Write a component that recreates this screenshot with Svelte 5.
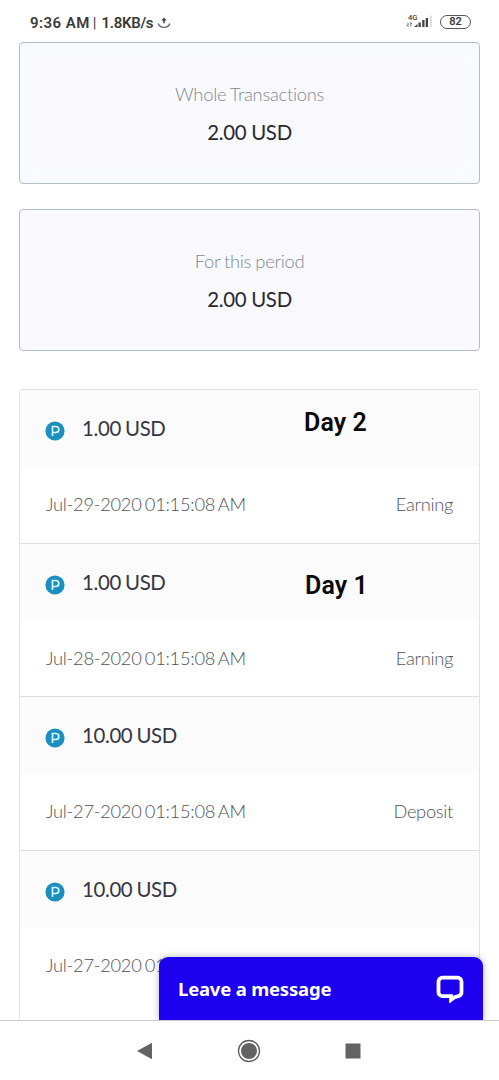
<script>
  const summaries = [
    { label: 'Whole Transactions', amount: '2.00 USD', tone: 'cool' },
    { label: 'For this period', amount: '2.00 USD', tone: 'plain' }
  ];
  const rows = [
    { amount: '1.00 USD', date: 'Jul-29-2020 01:15:08 AM', kind: 'Earning', note: 'Day 2' },
    { amount: '1.00 USD', date: 'Jul-28-2020 01:15:08 AM', kind: 'Earning', note: 'Day 1' },
    { amount: '10.00 USD', date: 'Jul-27-2020 01:15:08 AM', kind: 'Deposit' },
    { amount: '10.00 USD', date: 'Jul-27-2020 01:15:08 AM', kind: 'Deposit' }
  ];
</script>

<div class="screen">
  <header class="status">
    <div class="status-left">
      <span class="clock">9:36 AM</span><span class="bar">|</span><span class="speed">1.8KB/s</span>
      <svg class="share" width="14" height="14" viewBox="0 0 14 14">
        <path d="M1.200 7.500C2 10 4 11.400 7 11.400s5-1.400 5.800-3.900" fill="none" stroke="#666" stroke-width="1.300" />
        <path d="M7 1.500 4.200 4.500h2v2.800h1.600V4.500h2z" fill="#444" />
      </svg>
    </div>
    <div class="status-right">
      <svg width="27" height="17" viewBox="0 0 27 17">
        <text x="2" y="6.600" class="net">4G</text>
        <path d="M2 9.500v4M.7 11.800 2 13.500M4.800 13.500v-4M6 11.200 4.800 9.500" fill="none" stroke="#666" stroke-width=".9" />
        <path d="M8 14l3.500-3V14zM12.500 9.500h2.300V14h-2.300zM16.200 7h2.300v7h-2.300zM19.700 5h2.300v9h-2.300z" fill="#444" />
        <path d="M24 2.500h1.800V14H24z" fill="#ddd" />
      </svg>
      <span class="battery">82</span>
    </div>
  </header>

  <main class="page">
    {#each summaries as s}
      <section class="card {s.tone}">
        <div class="label">{s.label}</div>
        <div class="total">{s.amount}</div>
      </section>
    {/each}

    <section class="list">
      {#each rows as r}
        <article class="row">
          <div class="head">
            <svg class="coin" width="20" height="20" viewBox="0 0 20 20">
              <circle cx="10" cy="10" r="9.600" fill="#1b8fbd" />
              <path d="M7.500 15V5.500h3.300a3 3 0 0 1 0 6H7.500" fill="none" stroke="#d8f6ff" stroke-width="1.700" />
            </svg>
            <span class="amount">{r.amount}</span>
            {#if r.note}<strong class="note" class:lower={r.note === 'Day 1'}>{r.note}</strong>{/if}
          </div>
          <div class="body">
            <span class="date">{r.date}</span>
            <span class="kind">{r.kind}</span>
          </div>
        </article>
      {/each}
    </section>
  </main>

  <button class="chat">
    <span>Leave a message</span>
    <svg width="28" height="28" viewBox="0 0 28 28">
      <path d="M6.500 2.700h15a4 4 0 0 1 4 4v10.600a4 4 0 0 1-3.200 3.900c-2.600.4-4.800 1.400-7.300 3.600v-3.600H6.500a4 4 0 0 1-4-4V6.700a4 4 0 0 1 4-4z" fill="none" stroke="#fff" stroke-width="3.800" />
    </svg>
  </button>

  <nav class="nav">
    <svg width="16" height="18" viewBox="0 0 16 18"><path d="M0 9 15 .8v16.400z" fill="#636363" /></svg>
    <svg width="24" height="24" viewBox="0 0 24 24">
      <circle cx="12" cy="12" r="10.500" fill="none" stroke="#5c5c5c" stroke-width="1.300" />
      <circle cx="12" cy="12" r="8" fill="#636363" />
    </svg>
    <svg width="16" height="16" viewBox="0 0 16 16"><path d="M.5.500h15v15H.5z" fill="#636363" /></svg>
  </nav>
</div>

<style>
  :global(body) { margin: 0; background: #fff; }
  .screen {
    position: relative;
    display: grid;
    grid-template-rows: 42px 978px 60px;
    width: 499px;
    height: 1080px;
    overflow: hidden;
    background: #fff;
    font-family: Lato, sans-serif;
    font-variant-ligatures: none;
  }
  .screen :global(*) { box-sizing: border-box; }
  .status {
    display: flex;
    justify-content: space-between;
    padding: 13px 28px 0 30px;
    font-family: Roboto, sans-serif;
    color: #3a3a3a;
  }
  .status-left { display: flex; align-items: center; height: 19px; font-size: 15px; font-weight: 600; white-space: nowrap; }
  .clock { letter-spacing: .45px; }
  .bar { font-weight: 400; margin: 0 5px 0 3px; }
  .speed { letter-spacing: -.3px; }
  .share { margin-left: 4px; }
  .status-right { display: flex; gap: 7px; height: 17px; align-items: center; }
  .net { font: 500 7.5px Roboto, sans-serif; fill: #444; }
  .battery {
    width: 31px; height: 14px; border: 1.5px solid #555; border-radius: 7px;
    font-size: 11px; line-height: 12px; font-weight: 600; text-align: center;
  }
  .page { display: flex; flex-direction: column; overflow: hidden; padding: 0 19px; }
  .card {
    display: flex; flex: none; flex-direction: column; align-items: center;
    height: 142px; margin-bottom: 25px; padding-top: 38px;
    border: 1px solid #b3bfc6; border-radius: 4px; background: #fafafe;
  }
  .card.cool { box-shadow: inset 0 0 14px 6px #f6fbfe; }
  .label { font-size: 18.400px; line-height: 26px; font-weight: 300; color: #7b8a92; letter-spacing: -.3px; word-spacing: -.5px; }
  .total { margin-top: 11px; font-size: 20.400px; line-height: 28px; color: #292930; letter-spacing: -.3px; }
  .list { flex: 1; margin-top: 13px; border: 1px solid #e3e3e5; border-bottom: 0; border-radius: 4px 4px 0 0; }
  .row { height: 153.700px; border-bottom: 1px solid #dfdfe2; }
  .row:last-child { border-bottom: 0; }
  .head {
    position: relative; display: flex; align-items: center; height: 76px;
    padding-left: 25px; background: #fbfbfb;
  }
  .coin { margin-top: 6px; }
  .amount { margin-left: 17px; font-size: 20.400px; line-height: 28px; color: #363642; letter-spacing: -.36px; word-spacing: -.7px; }
  .note {
    position: absolute; left: 284px; top: 17px;
    font: 600 25px/32px Roboto, sans-serif; letter-spacing: .1px; color: #0a0a0a;
  }
  .note.lower { left: 285px; top: 26px; }
  .body {
    display: flex; align-items: center; justify-content: space-between; height: 76px;
    padding: 0 26px; font-size: 18.300px; font-weight: 300; color: #50525a;
  }
  .date { letter-spacing: -.28px; word-spacing: -1.3px; }
  .kind { letter-spacing: -.3px; }
  .chat {
    position: absolute; left: 159px; top: 957px; width: 324px; height: 63px;
    display: flex; align-items: center; justify-content: space-between;
    padding: 0 19px; border: 0; border-radius: 9px 9px 0 0;
    background: #1d00ed; color: #fff; box-shadow: 0 0 7px rgba(0, 0, 0, .3);
    font: 700 18.500px "Noto Sans", sans-serif; letter-spacing: -.2px;
  }
  .nav {
    z-index: 1; display: flex; align-items: center; justify-content: center; gap: 84px;
    padding-right: 1px; border-top: 1px solid #ccc; background: #fff;
  }
</style>
